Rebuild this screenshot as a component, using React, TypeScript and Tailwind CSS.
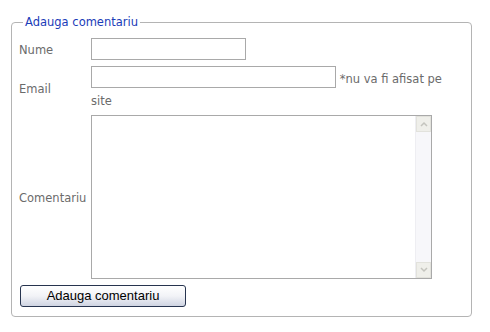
import React from 'react';

function FakeScrollbar() {
  return (
    <div className="flex w-[16px] flex-col border-l border-[#eeeef2] bg-[#f7f7fa]">
      <div className="flex h-[16px] items-center justify-center border border-[#e2e2dc] bg-[#efefea]">
        <svg width="8" height="6" viewBox="0 0 8 6">
          <path d="M1 5 L4 2 L7 5" fill="none" stroke="#c4c4be" strokeWidth="1.5" />
        </svg>
      </div>
      <div className="flex-1" />
      <div className="flex h-[16px] items-center justify-center border border-[#e2e2dc] bg-[#efefea]">
        <svg width="8" height="6" viewBox="0 0 8 6">
          <path d="M1 1 L4 4 L7 1" fill="none" stroke="#c4c4be" strokeWidth="1.5" />
        </svg>
      </div>
    </div>
  );
}

export default function App() {
  return (
    <div className="h-[332px] w-[490px] bg-white pl-[11px] pt-[15px] font-['DejaVu_Sans',sans-serif] text-[11.5px] text-[#6b6b6b]">
      <fieldset className="w-[461px] rounded-[4px] border border-[#b4b4b4] pb-[9px] pl-[7px] pt-[8px]">
        <legend className="ml-[4px] px-[2px] leading-[15px] text-[#1a3cb8]">Adauga comentariu</legend>

        {/* Nume */}
        <div className="flex items-center">
          <label className="w-[72px] pt-[4px]">Nume</label>
          <input type="text" className="h-[22px] w-[155px] border border-[#a9a9a9] bg-white outline-none" />
        </div>

        {/* Email */}
        <div className="mt-[6px] flex items-center">
          <label className="w-[72px] pt-[2px]">Email</label>
          <div className="w-[362px] pt-[2px] leading-[22px]">
            <input type="text" className="-mt-[2px] inline-block h-[22px] w-[245px] border border-[#a9a9a9] bg-white align-top outline-none" />{' '}
            *nu va fi afisat pe site
          </div>
        </div>

        {/* Comentariu */}
        <div className="mt-[3px] flex items-center">
          <label className="w-[72px] pt-[4px]">Comentariu</label>
          <div className="flex h-[164px] w-[341px] border border-[#a9a9a9] bg-white">
            <textarea className="flex-1 resize-none bg-white outline-none" />
            <FakeScrollbar />
          </div>
        </div>

        <button
          type="button"
          className="ml-[1px] mt-[6px] h-[22px] w-[166px] rounded-[3px] border border-[#27344f] bg-gradient-to-b from-white via-[#f2f3f7] to-[#cfd4e2] font-['Liberation_Sans',sans-serif] text-[13px] leading-[18px] text-black"
        >
          Adauga comentariu
        </button>
      </fieldset>
    </div>
  );
}
